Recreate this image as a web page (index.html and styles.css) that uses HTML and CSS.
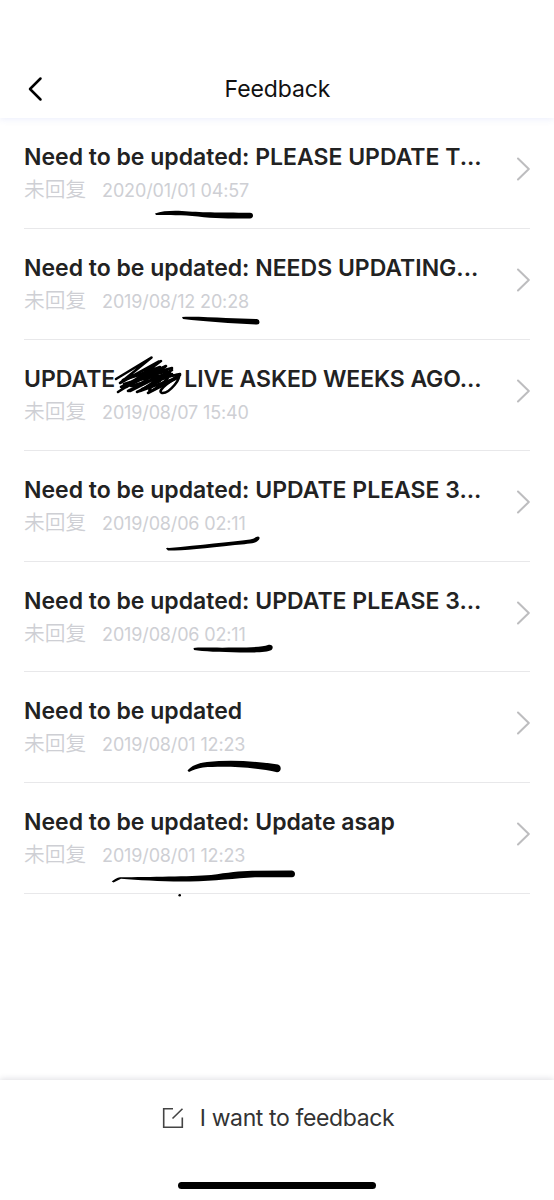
FILE: index.html
```html
<!DOCTYPE html>
<html lang="en">
<head>
<meta charset="utf-8">
<title>Feedback</title>
<link rel="stylesheet" href="styles.css">
</head>
<body>
<div class="screen">
  <header class="navbar">
    <svg class="back" viewBox="0 0 16 26" width="16" height="26"><path d="M13.5 2.5 3 13l10.500 10.500"/></svg>
    <h1 class="heading">Feedback</h1>
  </header>
  <main class="list">
    <article class="row">
      <div class="body"><h2 class="title">Need to be updated: PLEASE UPDATE T...</h2><p class="meta"><span class="status">未回复</span><time>2020/01/01 04:57</time></p></div>
      <svg class="chevron" viewBox="0 0 14 24" width="14" height="24"><path d="M2 1.500 12.800 12 2 22.500"/></svg>
    </article>
    <article class="row">
      <div class="body"><h2 class="title">Need to be updated: NEEDS UPDATING...</h2><p class="meta"><span class="status">未回复</span><time>2019/08/12 20:28</time></p></div>
      <svg class="chevron" viewBox="0 0 14 24" width="14" height="24"><path d="M2 1.500 12.800 12 2 22.500"/></svg>
    </article>
    <article class="row">
      <div class="body"><h2 class="title title-split"><span>UPDATE</span><span class="tight">LIVE ASKED WEEKS AGO...</span></h2><p class="meta"><span class="status">未回复</span><time>2019/08/07 15:40</time></p></div>
      <svg class="chevron" viewBox="0 0 14 24" width="14" height="24"><path d="M2 1.500 12.800 12 2 22.500"/></svg>
    </article>
    <article class="row">
      <div class="body"><h2 class="title">Need to be updated: UPDATE PLEASE 3...</h2><p class="meta"><span class="status">未回复</span><time>2019/08/06 02:11</time></p></div>
      <svg class="chevron" viewBox="0 0 14 24" width="14" height="24"><path d="M2 1.500 12.800 12 2 22.500"/></svg>
    </article>
    <article class="row">
      <div class="body"><h2 class="title">Need to be updated: UPDATE PLEASE 3...</h2><p class="meta"><span class="status">未回复</span><time>2019/08/06 02:11</time></p></div>
      <svg class="chevron" viewBox="0 0 14 24" width="14" height="24"><path d="M2 1.500 12.800 12 2 22.500"/></svg>
    </article>
    <article class="row">
      <div class="body"><h2 class="title">Need to be updated</h2><p class="meta"><span class="status">未回复</span><time>2019/08/01 12:23</time></p></div>
      <svg class="chevron" viewBox="0 0 14 24" width="14" height="24"><path d="M2 1.500 12.800 12 2 22.500"/></svg>
    </article>
    <article class="row">
      <div class="body"><h2 class="title">Need to be updated: Update asap</h2><p class="meta"><span class="status">未回复</span><time>2019/08/01 12:23</time></p></div>
      <svg class="chevron" viewBox="0 0 14 24" width="14" height="24"><path d="M2 1.500 12.800 12 2 22.500"/></svg>
    </article>
  </main>
  <footer class="footer">
    <div class="action">
      <svg class="compose" viewBox="0 0 22 22" width="22" height="22"><path d="M11 1.700H1.700V20.300H20.300V10.500M10.500 11.500 20.500 1.700"/></svg>
      <span>I want to feedback</span>
    </div>
    <div class="home-bar"></div>
  </footer>
  <svg class="ink" viewBox="0 0 554 1200" width="554" height="1200">
    <path d="M155 213.500C162 211 172 210.500 182 211 200 212.500 218 212.500 250 212.700Q253 213 253 215.500T250 218.500C228 218.500 214 218.500 198 216.500 182 214.800 168 215.500 156 215Z"/>
    <path d="M182 317C195 316.500 212 317.500 226 318L257 319Q259.500 319.300 259.500 322T256.500 324.500C232 323.500 205 321.500 183 319Z"/>
    <path d="M166 548.500Q167 547.200 169 548C200 545 230 542 250 539.500 255 538.500 256 536.500 258 536.500 260.500 537 260 539.500 257 541.500 253 544 245 544 235 545 205 548.500 185 550.500 168 550.500Z"/>
    <path d="M193.500 648C200 647 215 648 235 647.500 252 647.500 263 647 268 645 272.500 644 274 647.500 271.500 650 267 652.800 252 652.500 240 652.500 220 652 203 651.500 194 650Z"/>
    <path d="M187.500 770.500C191 766 198 763 207 762 230 759.500 254 761 278 764.500 282 766 281.500 772 277 772.200 255 767 225 766 203 767.500 198 768 193 770 189 772Z"/>
    <path d="M111.700 881.500C114.500 879.500 117 877.500 120 877.300 150 877 190 876.500 211 875 228 872.500 240 871 252 870.700L292 870.500C296 871 296 877 292 877.200L255 877.300C235 878.500 215 881 190 881.500 165 882 140 880 121 878.700L113.500 882.500Z"/>
    <circle cx="179.700" cy="895.200" r="1.300"/>
    <path class="scribble" d="M116 379 151.500 357.500 120 383 159 361.500 126 387 165 367 130 391 172 370 140 391 179 377 148 393 180 375"/>
    <path class="scribble" d="M118 392 133 382 161 361 M118 392 142 377 166 366 M121 387 145 375 172 368 M128 391 148 381 180 374 M137 392 160 381 M123 380 155 370 M124 384 167 371 M131 386 172 374 M132 377 160 367 M134 381 158 376"/>
    <path class="scribble" d="M142 389C150 387 166 371 170 373 172 377 154 391 150 391 146 390 161 376 177 375 184 376 169 394 162 393 155 391 175 378 179 376"/>
  </svg>
</div>
</body>
</html>
```
FILE: styles.css
```css
* { box-sizing: border-box; }
body { margin: 0; background: #fff; font-family: Inter, "Noto Sans CJK SC", sans-serif; }
svg { fill: none; flex: none; display: block; }
h1, h2, p { margin: 0; font-weight: 400; }
.screen { position: relative; width: 554px; height: 1200px; display: flex; flex-direction: column; overflow: hidden; }
.navbar { height: 118px; padding: 60px 26px 0 27px; display: grid; grid-template-columns: 40px 1fr 40px; align-items: center; box-shadow: 0 1px 7px rgba(80, 110, 220, .12); }
.back { stroke: #000; stroke-width: 2.500; stroke-linecap: round; stroke-linejoin: round; }
.heading { font-size: 23px; line-height: 30px; letter-spacing: -.1px; text-align: center; color: #111; white-space: nowrap; padding-bottom: 1px; }
.list { flex: 1; padding: .3px 24px 0; }
.row { height: 110.830px; display: flex; justify-content: space-between; border-bottom: 1px solid #e8e8ea; padding-top: 24px; }
.body { display: flex; flex-direction: column; }
.title { font-size: 23px; font-weight: 600; line-height: 30px; color: #222; white-space: nowrap; }
.title-split { display: flex; gap: 69px; }
.tight { letter-spacing: -.1px; }
.meta { display: flex; align-items: center; gap: 16px; height: 30px; margin-top: 3px; font-size: 18px; letter-spacing: -.15px; color: #cecfd4; white-space: nowrap; }
.meta time { padding-top: 1px; }
.status { font-family: "Noto Sans CJK SC", sans-serif; font-size: 20.700px; font-weight: 350; line-height: 30px; letter-spacing: 0; padding-bottom: 4px; }
.chevron { margin-top: 15px; stroke: #bdbdbf; stroke-width: 2; stroke-linecap: round; stroke-linejoin: round; }
.footer { height: 120px; display: flex; flex-direction: column; align-items: center; justify-content: space-between; padding: 22px 0 11px; background: #fff; box-shadow: 0 -1px 6px rgba(40, 40, 70, .15); }
.action { display: flex; align-items: center; gap: 16px; font-size: 23px; line-height: 32px; letter-spacing: -.38px; color: #333; white-space: nowrap; padding-left: 2px; }
.compose { stroke: #444; stroke-width: 1.600; }
.home-bar { width: 198px; height: 7px; border-radius: 4px; background: #000; }
.ink { position: absolute; inset: 0; fill: #000; pointer-events: none; }
.scribble { fill: none; stroke: #000; stroke-width: 2.600; stroke-linecap: round; stroke-linejoin: round; }
```
